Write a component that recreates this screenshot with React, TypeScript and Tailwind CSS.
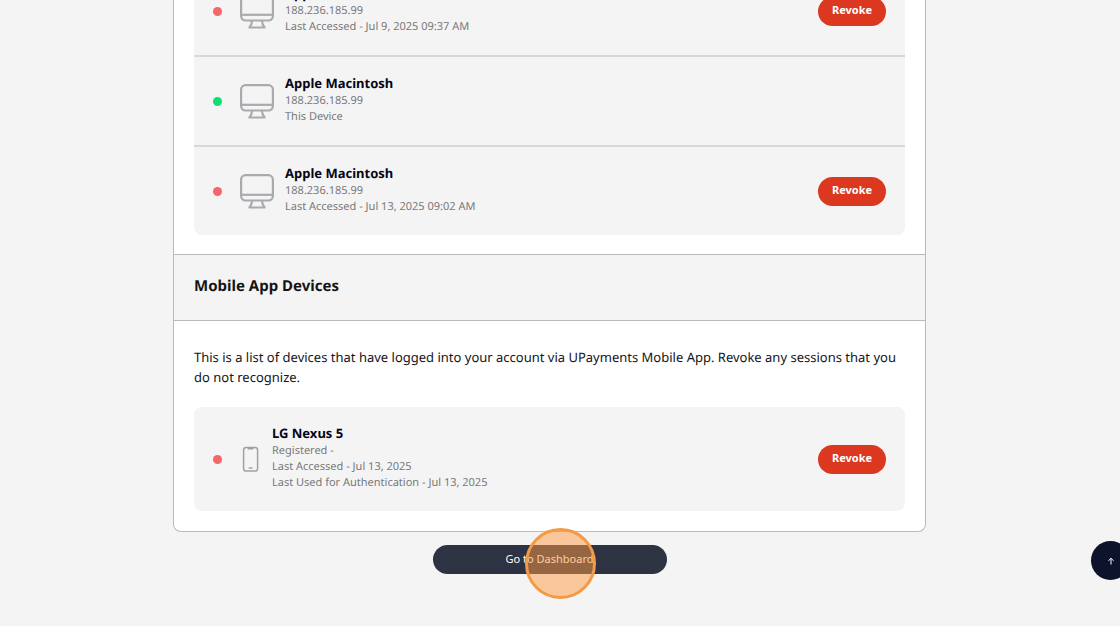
import React from 'react';

interface Session {
  id: number;
  name: string;
  details: string[];
  current?: boolean;
}

const webSessions: Session[] = [
  { id: 1, name: 'Apple Macintosh', details: ['188.236.185.99', 'Last Accessed - Jul 9, 2025 09:37 AM'] },
  { id: 2, name: 'Apple Macintosh', details: ['188.236.185.99', 'This Device'], current: true },
  { id: 3, name: 'Apple Macintosh', details: ['188.236.185.99', 'Last Accessed - Jul 13, 2025 09:02 AM'] },
];

const mobileSessions: Session[] = [
  {
    id: 4,
    name: 'LG Nexus 5',
    details: ['Registered -', 'Last Accessed - Jul 13, 2025', 'Last Used for Authentication - Jul 13, 2025'],
  },
];

function MonitorIcon() {
  return (
    <svg width="34" height="35" viewBox="0 0 34 35" fill="none" stroke="#a9aaae" strokeWidth="2.2" strokeLinejoin="round" aria-hidden="true">
      <rect x="1.1" y="1.1" width="31.8" height="25.4" rx="4.5" />
      <path d="M1.1 20.8h31.8" />
      <path d="M12 26.5c0 3-.8 5-2.6 7h15.2c-1.8-2-2.6-4-2.6-7" />
    </svg>
  );
}

function PhoneIcon() {
  return (
    <svg width="21" height="26" viewBox="0 0 21 26" fill="none" stroke="#a0a1a5" aria-hidden="true">
      <rect x="3.6" y="1.4" width="14" height="23.6" rx="2.6" strokeWidth="1.5" />
      <path d="M7.8 1.6l.6 1.4h4.4l.6-1.4" strokeWidth="1.2" fill="#a0a1a5" />
      <path d="M8.6 22h4" strokeWidth="1.4" />
    </svg>
  );
}

function SessionRow({ session, icon }: { session: Session; icon: React.ReactNode }) {
  return (
    <li className="flex items-center px-[19px] py-4">
      <span className={session.current ? 'size-[9px] rounded-full bg-[#14dc74]' : 'size-[9px] rounded-full bg-[#f4666b]'} />
      <span className="ml-[18px] shrink-0">{icon}</span>
      <div className="ml-[11px] flex-1 pb-1">
        <h3 className="text-[13px] leading-5 font-bold text-[#05051a]">{session.name}</h3>
        {session.details.map((detail) => (
          <p key={detail} className="text-[11px] leading-4 text-[#78787a]">
            {detail}
          </p>
        ))}
      </div>
      {!session.current && (
        <button type="button" className="h-[29px] w-[68px] rounded-full bg-[#dc3820] pb-px text-[11px] font-bold text-white">
          Revoke
        </button>
      )}
    </li>
  );
}

export default function App() {
  return (
    <div className="relative min-h-screen overflow-hidden bg-[#f4f4f4] pr-[21px] font-['Noto_Sans',sans-serif] [text-rendering:geometricPrecision]">
      <main className="mx-auto -mt-[33px] max-w-[753px]">
        <div className="overflow-hidden rounded-b-lg border border-t-0 border-[#b9b9bb] bg-white">
          <section className="px-5 pb-[19px]">
            <ul className="divide-y-2 divide-[#d8d8d8] rounded-b-lg bg-[#f4f4f4]">
              {webSessions.map((session) => (
                <SessionRow key={session.id} session={session} icon={<MonitorIcon />} />
              ))}
            </ul>
          </section>

          <header className="border-y border-[#b9b9bb] bg-[#f4f4f4] px-5 pt-[19px] pb-[22px]">
            <h2 className="text-[15px] leading-6 font-bold text-[#141414]">Mobile App Devices</h2>
          </header>

          <section className="px-5 pt-[26px] pb-5">
            <p className="text-[13px] leading-5 text-[#141420]">
              This is a list of devices that have logged into your account via UPayments Mobile App. Revoke any sessions that you
              do not recognize.
            </p>
            <ul className="mt-5 rounded-lg bg-[#f4f4f4]">
              {mobileSessions.map((session) => (
                <SessionRow key={session.id} session={session} icon={<PhoneIcon />} />
              ))}
            </ul>
          </section>
        </div>

        <div className="mt-[13px] flex justify-center">
          <div className="relative">
            <button type="button" className="h-[29px] w-[234px] rounded-full bg-[#2d3343] pb-px text-[11px] text-white">
              Go to Dashboard
            </button>
            {/* click marker */}
            <span className="pointer-events-none absolute -top-[17px] left-[92px] size-[71px] rounded-full border-3 border-[#f39a45] bg-[#ff9742]/50" />
          </div>
        </div>
      </main>

      <button
        type="button"
        aria-label="Back to top"
        className="absolute top-[541px] -right-[10px] flex size-[39px] items-center justify-center rounded-full bg-[#0c132b]"
      >
        <svg width="8" height="8" viewBox="0 0 8 8" fill="none" stroke="#fff" aria-hidden="true">
          <path d="M4 7.5V1.5M1.5 3.8L4 1.2l2.5 2.6" />
        </svg>
      </button>
    </div>
  );
}
